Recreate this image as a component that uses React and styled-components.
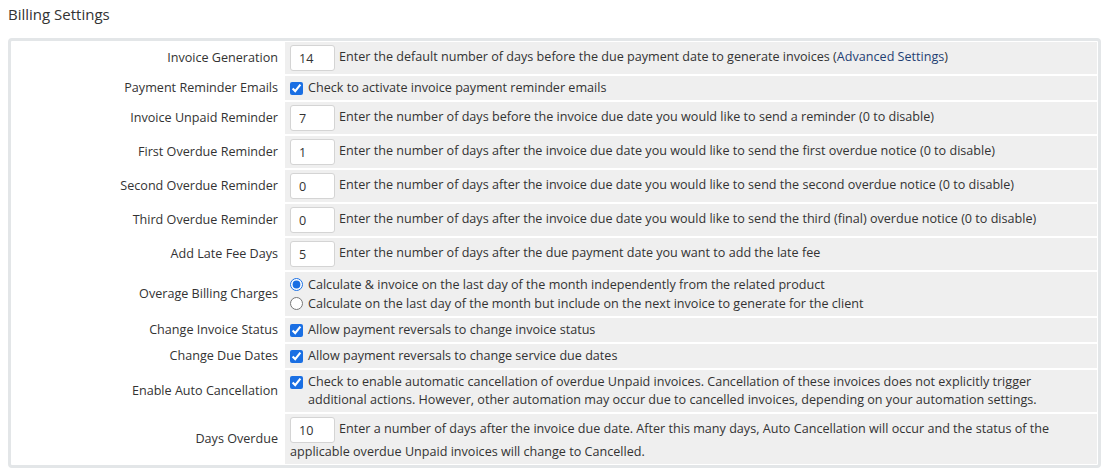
import React from 'react';
import styled, { createGlobalStyle } from 'styled-components';

const GlobalStyle = createGlobalStyle`
  body {
    margin: 0;
    background: #fff;
    font-family: 'Open Sans', 'Liberation Sans', sans-serif;
    font-size: 12.6px;
    color: #333;
  }
`;

const Page = styled.div`
  padding: 4px 8px 8px;
`;

const Title = styled.h2`
  margin: 0 0 14px;
  font-size: 15px;
  line-height: 20px;
  font-weight: 400;
  color: #333;
`;

const Panel = styled.div`
  border: 3px solid #e3e6e8;
  border-radius: 4px;
  padding: 1px;
  display: grid;
  grid-template-columns: 271px 1fr;
  gap: 2px;
`;

const Label = styled.div`
  display: flex;
  align-items: center;
  justify-content: flex-end;
  padding: 0 5px;
  line-height: 18px;
  color: #333;
`;

const Field = styled.div`
  background: #efefef;
  padding: 3px 5px;
  line-height: 18px;
  display: ${p => (p.$center ? 'flex' : 'block')};
  align-items: center;
`;

const NumInput = styled.input`
  box-sizing: border-box;
  width: 45px;
  height: 26px;
  padding: 0 8px;
  margin: 0 4px 0 0;
  border: 1px solid #d4d4d4;
  border-radius: 3px;
  background: #fff;
  font-family: inherit;
  font-size: 12.6px;
  color: #333;
  vertical-align: middle;
`;

const Check = styled.label`
  display: flex;
  align-items: ${p => (p.$top ? 'flex-start' : 'center')};
  gap: 5px;

  input {
    margin: ${p => (p.$top ? '3px 0 0 0' : '0')};
    width: 13px;
    height: 13px;
    flex: none;
    accent-color: #1a6fe3;
  }
`;

const RadioGroup = styled.div`
  display: flex;
  flex-direction: column;
`;

const Radio = styled.label`
  display: flex;
  align-items: center;
  gap: 5px;
  height: 19px;

  input {
    margin: 0;
    width: 13px;
    height: 13px;
    accent-color: #1a6fe3;
  }
`;

const Link = styled.a`
  color: #1f3f73;
  text-decoration: none;
`;

const numberRows = [
  ['Invoice Unpaid Reminder', '7', 'Enter the number of days before the invoice due date you would like to send a reminder (0 to disable)'],
  ['First Overdue Reminder', '1', 'Enter the number of days after the invoice due date you would like to send the first overdue notice (0 to disable)'],
  ['Second Overdue Reminder', '0', 'Enter the number of days after the invoice due date you would like to send the second overdue notice (0 to disable)'],
  ['Third Overdue Reminder', '0', 'Enter the number of days after the invoice due date you would like to send the third (final) overdue notice (0 to disable)'],
  ['Add Late Fee Days', '5', 'Enter the number of days after the due payment date you want to add the late fee'],
];

const App = () => {
  return (
    <Page>
      <GlobalStyle />
      <Title>Billing Settings</Title>
      <Panel>
        <Label>Invoice Generation</Label>
        <Field>
          <NumInput defaultValue="14" />
          Enter the default number of days before the due payment date to generate invoices (
          <Link href="#">Advanced Settings</Link>)
        </Field>

        <Label>Payment Reminder Emails</Label>
        <Field $center>
          <Check>
            <input type="checkbox" defaultChecked />
            Check to activate invoice payment reminder emails
          </Check>
        </Field>

        {numberRows.map(([label, value, text]) => (
          <React.Fragment key={label}>
            <Label>{label}</Label>
            <Field>
              <NumInput defaultValue={value} />
              {text}
            </Field>
          </React.Fragment>
        ))}

        <Label>Overage Billing Charges</Label>
        <Field>
          <RadioGroup>
            <Radio>
              <input type="radio" name="overage" defaultChecked />
              Calculate &amp; invoice on the last day of the month independently from the related product
            </Radio>
            <Radio>
              <input type="radio" name="overage" />
              Calculate on the last day of the month but include on the next invoice to generate for the client
            </Radio>
          </RadioGroup>
        </Field>

        <Label>Change Invoice Status</Label>
        <Field $center>
          <Check>
            <input type="checkbox" defaultChecked />
            Allow payment reversals to change invoice status
          </Check>
        </Field>

        <Label>Change Due Dates</Label>
        <Field $center>
          <Check>
            <input type="checkbox" defaultChecked />
            Allow payment reversals to change service due dates
          </Check>
        </Field>

        <Label>Enable Auto Cancellation</Label>
        <Field>
          <Check $top>
            <input type="checkbox" defaultChecked />
            <span>
              Check to enable automatic cancellation of overdue Unpaid invoices. Cancellation of these invoices does not explicitly trigger
              additional actions. However, other automation may occur due to cancelled invoices, depending on your automation settings.
            </span>
          </Check>
        </Field>

        <Label>Days Overdue</Label>
        <Field>
          <NumInput defaultValue="10" />
          Enter a number of days after the invoice due date. After this many days, Auto Cancellation will occur and the status of the
          applicable overdue Unpaid invoices will change to Cancelled.
        </Field>
      </Panel>
    </Page>
  );
};

export default App;
